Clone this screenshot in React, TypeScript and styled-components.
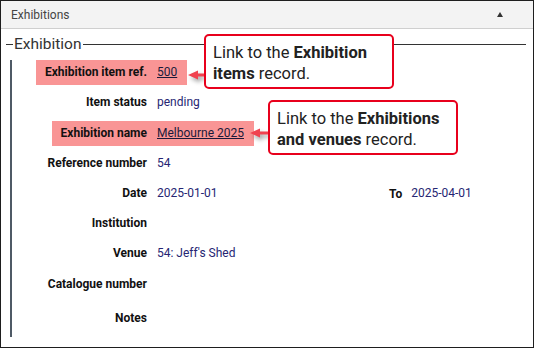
import React from 'react';
import styled, { createGlobalStyle } from 'styled-components';

const GlobalStyle = createGlobalStyle`
  html, body {
    margin: 0;
    padding: 0;
    background: #fff;
  }
  body {
    font-family: Roboto, 'Liberation Sans', sans-serif;
  }
`;

const Panel = styled.div`
  position: relative;
  box-sizing: border-box;
  width: 534px;
  height: 348px;
  border: 1px solid #1e1e1e;
  background: #fff;
  overflow: hidden;
`;
const PanelHeader = styled.div`
  display: flex;
  align-items: center;
  justify-content: space-between;
  height: 27px;
  padding: 0 30px 0 10px;
  background-color: #f3f3f3;
  border-bottom: 1px solid #cfcfcf;
  color: #444;
  font-size: 12px;
`;
const Caret = styled.span`
  width: 0;
  height: 0;
  border-left: 3px solid transparent;
  border-right: 3px solid transparent;
  border-bottom: 5px solid #333;
`;
const Fieldset = styled.div`
  margin: 6px 7px 0 5px;
`;
const Legend = styled.div`
  display: flex;
  align-items: center;
  height: 18px;
  color: #333;
  font-size: 15.5px;
  &::before,
  &::after {
    content: '';
    height: 1px;
    background: #333;
  }
  &::before {
    width: 7px;
    margin-right: 1px;
  }
  &::after {
    flex: 1;
    margin-left: 1px;
  }
`;
const FormBody = styled.div`
  display: flex;
  flex-direction: column;
  gap: 5px;
  margin: 7px 0 0 4px;
  padding-bottom: 6px;
  border-left: 2px solid #4f5a66;
`;
const Row = styled.div<{ extra?: number }>`
  display: flex;
  align-items: center;
  height: 25px;
  margin-top: ${(props) => props.extra || 0}px;
  font-size: 12px;
`;
const LabelCell = styled.div`
  display: flex;
  justify-content: flex-end;
  flex: 0 0 145px;
`;
const Label = styled.span<{ marked?: boolean }>`
  height: 25px;
  line-height: 25px;
  padding: 0 10px 0 ${(props) => (props.marked ? 9 : 0)}px;
  background: ${(props) => (props.marked ? '#f99595' : 'transparent')};
  color: #111;
  font-weight: bold;
`;
const ValueCell = styled.div<{ width?: number }>`
  flex: ${(props) => (props.width ? `0 0 ${props.width}px` : 1)};
`;
const Value = styled.span<{ marked?: boolean; link?: boolean }>`
  display: inline-block;
  height: 25px;
  line-height: 25px;
  padding-right: ${(props) => (props.marked ? 10 : 0)}px;
  background: ${(props) => (props.marked ? '#f99595' : 'transparent')};
  color: ${(props) => (props.link ? '#1a1a3a' : '#262673')};
  text-decoration: ${(props) => (props.link ? 'underline' : 'none')};
`;
const SideLabel = styled.span`
  margin-right: 9px;
  color: #111;
  font-weight: bold;
`;
const Callout = styled.div<{ x: number; y: number; w: number }>`
  position: absolute;
  left: ${(props) => props.x}px;
  top: ${(props) => props.y}px;
  box-sizing: border-box;
  width: ${(props) => props.w}px;
  height: 55px;
  padding: 6px 0 0 7px;
  border: 2px solid #e8001c;
  border-radius: 5px;
  background: #fff;
  color: #222;
  font-size: 16.5px;
  line-height: 21px;
  b {
    font-weight: bold;
  }
`;
const ArrowWrap = styled.svg<{ x: number; y: number }>`
  position: absolute;
  left: ${(props) => props.x}px;
  top: ${(props) => props.y}px;
  overflow: visible;
  filter: drop-shadow(2px 3px 2px rgba(0, 0, 0, 0.35));
`;

const Arrow = ({ x, y, length }: { x: number; y: number; length: number }) => (
  <ArrowWrap x={x} y={y} width={length} height={12}>
    <rect x={8} y={4.5} width={length - 8} height={3} fill="#f0424f" />
    <polygon points={`0,6 10,1.5 10,10.5`} fill="#f0424f" />
  </ArrowWrap>
);

const fields = [
  { label: 'Item status', value: 'pending' },
  { label: 'Reference number', value: '54' },
];

const App: React.FC = () => {
  return (
    <>
      <GlobalStyle />
      <Panel>
        <PanelHeader>
          <span>Exhibitions</span>
          <Caret />
        </PanelHeader>
        <Fieldset>
          <Legend>Exhibition</Legend>
          <FormBody>
            <Row>
              <LabelCell>
                <Label marked>Exhibition item ref.</Label>
              </LabelCell>
              <ValueCell>
                <Value marked link>
                  500
                </Value>
              </ValueCell>
            </Row>
            <Row>
              <LabelCell>
                <Label>{fields[0].label}</Label>
              </LabelCell>
              <ValueCell>
                <Value>{fields[0].value}</Value>
              </ValueCell>
            </Row>
            <Row extra={1}>
              <LabelCell>
                <Label marked>Exhibition name</Label>
              </LabelCell>
              <ValueCell>
                <Value marked link>
                  Melbourne 2025
                </Value>
              </ValueCell>
            </Row>
            <Row>
              <LabelCell>
                <Label>{fields[1].label}</Label>
              </LabelCell>
              <ValueCell>
                <Value>{fields[1].value}</Value>
              </ValueCell>
            </Row>
            <Row>
              <LabelCell>
                <Label>Date</Label>
              </LabelCell>
              <ValueCell width={232}>
                <Value>2025-01-01</Value>
              </ValueCell>
              <SideLabel>To</SideLabel>
              <ValueCell>
                <Value>2025-04-01</Value>
              </ValueCell>
            </Row>
            <Row>
              <LabelCell>
                <Label>Institution</Label>
              </LabelCell>
              <ValueCell />
            </Row>
            <Row>
              <LabelCell>
                <Label>Venue</Label>
              </LabelCell>
              <ValueCell>
                <Value>54: Jeff's Shed</Value>
              </ValueCell>
            </Row>
            <Row extra={1}>
              <LabelCell>
                <Label>Catalogue number</Label>
              </LabelCell>
              <ValueCell />
            </Row>
            <Row extra={4}>
              <LabelCell>
                <Label>Notes</Label>
              </LabelCell>
              <ValueCell />
            </Row>
          </FormBody>
        </Fieldset>

        <Arrow x={187} y={68} length={17} />
        <Callout x={203} y={33} w={190}>
          Link to the <b>Exhibition</b>
          <br />
          <b>items</b> record.
        </Callout>

        <Arrow x={249} y={126} length={19} />
        <Callout x={267} y={99} w={190}>
          Link to the <b>Exhibitions</b>
          <br />
          <b>and venues</b> record.
        </Callout>
      </Panel>
    </>
  );
};

export default App;
